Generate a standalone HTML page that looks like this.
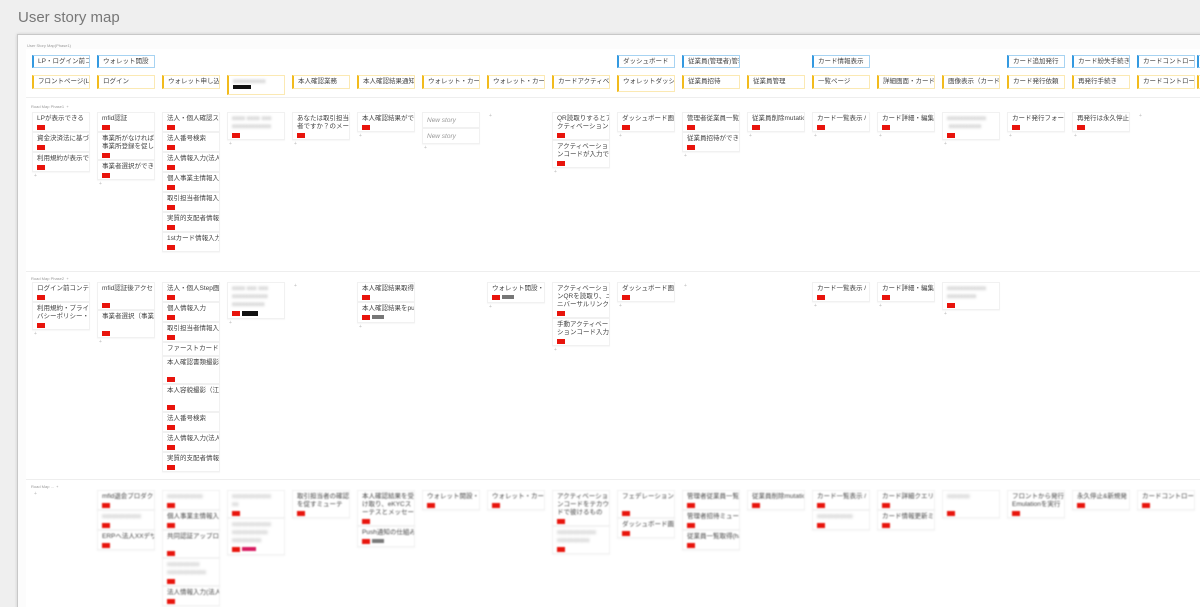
<!DOCTYPE html>
<html><head><meta charset="utf-8"><style>
*{margin:0;padding:0;box-sizing:border-box}
html,body{width:1200px;height:607px;overflow:hidden}
body{background:#efefef;font-family:"Liberation Sans","Noto Sans CJK JP",sans-serif;position:relative}
h1{position:absolute;left:18px;top:9px;font-weight:normal;font-size:15px;color:#777}
.panel{position:absolute;left:17px;top:34px;width:1190px;height:580px;background:#fcfcfc;border:1px solid #c8c8c8;box-shadow:0 0 3px rgba(0,0,0,.15)}
.inner{position:absolute;left:26px;top:49px;width:1180px;height:560px;background:#fff}
.lbl{position:absolute;font-size:4px;color:#999}
.hline{position:absolute;left:26px;width:1180px;height:1px;background:#eee}
.act,.task{position:absolute;width:58px;height:13px;font-size:6.5px;line-height:11px;padding-left:4px;white-space:nowrap;overflow:hidden;color:#444;background:#fff}
.act{border:1px solid #a7d3f2;border-left:2px solid #3399e0}
.task{border:1px solid #fbe9b3;border-left:2px solid #f2bb1c;height:14px}
.col{position:absolute;width:58px}
.c{background:#fff;border:1px solid #f1f1f1;box-shadow:0 1px 1px rgba(0,0,0,.04);padding:2px 4px 1px;font-size:6.5px;line-height:8px;color:#444;white-space:nowrap;overflow:hidden;min-height:20px}
.c i{display:block;width:8px;height:5px;background:#e8140c;margin-top:2px}
.c b{display:inline-block;width:8px;height:5px;background:#e8140c;margin-top:2px;vertical-align:top}
.c u{display:inline-block;width:12px;height:4px;background:#777;margin:2px 0 0 2px;vertical-align:top}
.c.ns{color:#999;font-style:italic;min-height:16px;line-height:11px}
.bl{filter:blur(1.2px);color:#999}
.r3 .c{filter:blur(.7px)}
.dot{font-size:5px;color:#bbb;padding-left:2px;line-height:8px}
</style></head><body>
<h1>User story map</h1>
<div class="panel"></div>
<div class="inner"></div>
<div class="lbl" style="left:27px;top:43px">User Story Map(Phase1)</div>

<div class="act" style="left:32px;top:55px">LP・ログイン前コ</div>
<div class="act" style="left:97px;top:55px">ウォレット開設</div>
<div class="act" style="left:617px;top:55px">ダッシュボード</div>
<div class="act" style="left:682px;top:55px">従業員(管理者)管理</div>
<div class="act" style="left:812px;top:55px">カード情報表示</div>
<div class="act" style="left:1007px;top:55px">カード追加発行</div>
<div class="act" style="left:1072px;top:55px">カード紛失手続き</div>
<div class="act" style="left:1137px;top:55px">カードコントロー</div>
<div class="act" style="left:1197px;top:55px"></div>

<div class="task" style="left:32px;top:75px">フロントページ(LP</div>
<div class="task" style="left:97px;top:75px">ログイン</div>
<div class="task" style="left:162px;top:75px">ウォレット申し込</div>
<div class="task" style="left:227px;top:75px;height:20px"><span class="bl">xxxxxxxxxx</span><br><span style="display:inline-block;width:18px;height:4px;background:#111;vertical-align:top;margin-top:-2px"></span></div>
<div class="task" style="left:292px;top:75px">本人確認業務</div>
<div class="task" style="left:357px;top:75px">本人確認結果通知</div>
<div class="task" style="left:422px;top:75px">ウォレット・カー</div>
<div class="task" style="left:487px;top:75px">ウォレット・カー</div>
<div class="task" style="left:552px;top:75px">カードアクティベ</div>
<div class="task" style="left:617px;top:75px;height:17px">ウォレットダッシ</div>
<div class="task" style="left:682px;top:75px">従業員招待</div>
<div class="task" style="left:747px;top:75px">従業員管理</div>
<div class="task" style="left:812px;top:75px">一覧ページ</div>
<div class="task" style="left:877px;top:75px">詳細画面・カード</div>
<div class="task" style="left:942px;top:75px">画像表示（カード</div>
<div class="task" style="left:1007px;top:75px">カード発行依頼</div>
<div class="task" style="left:1072px;top:75px">再発行手続き</div>
<div class="task" style="left:1137px;top:75px">カードコントロー</div>
<div class="task" style="left:1197px;top:75px"></div>

<div class="hline" style="top:97px"></div>
<div class="lbl" style="left:31px;top:104px">Road Map Phase1 &nbsp;+</div>

<!-- release 1 -->
<div class="col" style="left:32px;top:112px"><div class="c">LPが表示できる<i></i></div><div class="c">資金決済法に基づ<i></i></div><div class="c">利用規約が表示で<i></i></div><div class="dot">+</div></div>
<div class="col" style="left:97px;top:112px"><div class="c">mfid認証<i></i></div><div class="c">事業所がなければ<br>事業所登録を促し<i></i></div><div class="c">事業者選択ができ<i></i></div><div class="dot">+</div></div>
<div class="col" style="left:162px;top:112px"><div class="c">法人・個人確認ス<i></i></div><div class="c">法人番号検索<i></i></div><div class="c">法人情報入力(法人<i></i></div><div class="c">個人事業主情報入<i></i></div><div class="c">取引担当者情報入<i></i></div><div class="c">実質的支配者情報<i></i></div><div class="c">1stカード情報入力<i></i></div></div>
<div class="col" style="left:227px;top:112px"><div class="c"><span class="bl">xxxx xxxx xxx<br>xxxxxxxxxxxx</span><i></i></div><div class="dot">+</div></div>
<div class="col" style="left:292px;top:112px"><div class="c">あなたは取引担当<br>者ですか？のメー<i></i></div><div class="dot">+</div></div>
<div class="col" style="left:357px;top:112px"><div class="c">本人確認結果がで<i></i></div><div class="dot">+</div></div>
<div class="col" style="left:422px;top:112px"><div class="c ns">New story</div><div class="c ns">New story</div><div class="dot">+</div></div>
<div class="col" style="left:487px;top:112px"><div class="dot">+</div></div>
<div class="col" style="left:552px;top:112px"><div class="c">QR読取りするとア<br>クティベーション<i></i></div><div class="c">アクティベーショ<br>ンコードが入力で<i></i></div><div class="dot">+</div></div>
<div class="col" style="left:617px;top:112px"><div class="c">ダッシュボード画<i></i></div><div class="dot">+</div></div>
<div class="col" style="left:682px;top:112px"><div class="c">管理者従業員一覧<i></i></div><div class="c">従業員招待ができ<i></i></div><div class="dot">+</div></div>
<div class="col" style="left:747px;top:112px"><div class="c">従業員削除mutatio<i></i></div><div class="dot">+</div></div>
<div class="col" style="left:812px;top:112px"><div class="c">カード一覧表示 /<i></i></div><div class="dot">+</div></div>
<div class="col" style="left:877px;top:112px"><div class="c">カード詳細・編集<i></i></div><div class="dot">+</div></div>
<div class="col" style="left:942px;top:112px"><div class="c"><span class="bl">xxxxxxxxxxxx<br>&nbsp;xxxxxxxxxx</span><i></i></div><div class="dot">+</div></div>
<div class="col" style="left:1007px;top:112px"><div class="c">カード発行フォー<i></i></div><div class="dot">+</div></div>
<div class="col" style="left:1072px;top:112px"><div class="c">再発行は永久停止&amp;<i></i></div><div class="dot">+</div></div>
<div class="col" style="left:1137px;top:112px"><div class="dot">+</div></div>

<div class="hline" style="top:271px"></div>
<div class="lbl" style="left:31px;top:276px">Road Map Phase2 &nbsp;+</div>

<!-- release 2 -->
<div class="col" style="left:32px;top:282px"><div class="c">ログイン前コンテ<i></i></div><div class="c">利用規約・プライ<br>バシーポリシー・<i></i></div><div class="dot">+</div></div>
<div class="col" style="left:97px;top:282px"><div class="c">mfid認証後アクセ<br>&nbsp;<i></i></div><div class="c">事業者選択（事業<br>&nbsp;<i></i></div><div class="dot">+</div></div>
<div class="col" style="left:162px;top:282px"><div class="c">法人・個人Step画<i></i></div><div class="c">個人情報入力<i></i></div><div class="c">取引担当者情報入<i></i></div><div class="c" style="min-height:14px">ファーストカード</div><div class="c">本人確認書類撮影<br>&nbsp;<i></i></div><div class="c">本人容貌撮影（江<br>&nbsp;<i></i></div><div class="c">法人番号検索<i></i></div><div class="c">法人情報入力(法人<i></i></div><div class="c">実質的支配者情報<i></i></div></div>
<div class="col" style="left:227px;top:282px"><div class="c"><span class="bl">xxxx xxx xxx<br>xxxxxxxxxxx<br>xxxxxxxxxx</span><br><b></b><span style="display:inline-block;width:16px;height:5px;background:#111;margin:2px 0 0 2px;vertical-align:top"></span></div><div class="dot">+</div></div>
<div class="col" style="left:292px;top:282px"><div class="dot">+</div></div>
<div class="col" style="left:357px;top:282px"><div class="c">本人確認結果取得<i></i></div><div class="c">本人確認結果をpus<br><b></b><u></u></div><div class="dot">+</div></div>
<div class="col" style="left:487px;top:282px"><div class="c">ウォレット開設・<br><b></b><u></u></div><div class="dot">+</div></div>
<div class="col" style="left:552px;top:282px"><div class="c">アクティベーショ<br>ンQRを読取り、ユ<br>ニバーサルリンク<i></i></div><div class="c">手動アクティベー<br>ションコード入力<i></i></div><div class="dot">+</div></div>
<div class="col" style="left:617px;top:282px"><div class="c">ダッシュボード画<i></i></div><div class="dot">+</div></div>
<div class="col" style="left:682px;top:282px"><div class="dot">+</div></div>
<div class="col" style="left:812px;top:282px"><div class="c">カード一覧表示 /<i></i></div><div class="dot">+</div></div>
<div class="col" style="left:877px;top:282px"><div class="c">カード詳細・編集<i></i></div><div class="dot">+</div></div>
<div class="col" style="left:942px;top:282px"><div class="c"><span class="bl">xxxxxxxxxxxx<br>xxxxxxxxx</span><i></i></div><div class="dot">+</div></div>

<div class="hline" style="top:479px"></div>
<div class="lbl" style="left:31px;top:484px">Road Map ... &nbsp;+</div>

<!-- release 3 -->
<div class="r3">
<div class="col" style="left:32px;top:490px"><div class="dot">+</div></div>
<div class="col" style="left:97px;top:490px"><div class="c">mfid退会プロダク<i></i></div><div class="c"><span class="bl">xxxxxxxxxxxx</span><i></i></div><div class="c">ERPへ法人XXデザイン<i></i></div></div>
<div class="col" style="left:162px;top:490px"><div class="c"><span class="bl">xxxxxxxxxxx</span><i></i></div><div class="c">個人事業主情報入<i></i></div><div class="c">共同認証アップロ<br>&nbsp;<i></i></div><div class="c"><span class="bl">xxxxxxxxxx<br>xxxxxxxxxxxx</span><i></i></div><div class="c">法人情報入力(法人<i></i></div></div>
<div class="col" style="left:227px;top:490px"><div class="c"><span class="bl">xxxxxxxxxxxx<br>xx</span><i></i></div><div class="c"><span class="bl">xxxxxxxxxxxx<br>xxxxxxxxxxx<br>xxxxxxxxx</span><br><b></b><span style="display:inline-block;width:14px;height:4px;background:#d81b60;margin:2px 0 0 2px;vertical-align:top"></span></div></div>
<div class="col" style="left:292px;top:490px"><div class="c">取引担当者の確認<br>を促すミューテ<i></i></div></div>
<div class="col" style="left:357px;top:490px"><div class="c">本人確認結果を受<br>け取り、eKYCス<br>ーテスとメッセー<i></i></div><div class="c">Push通知の仕組み<br><b></b><u></u></div></div>
<div class="col" style="left:422px;top:490px"><div class="c">ウォレット開設・<i></i></div></div>
<div class="col" style="left:487px;top:490px"><div class="c">ウォレット・カー<i></i></div></div>
<div class="col" style="left:552px;top:490px"><div class="c">アクティベーショ<br>ンコードをテカウ<br>ドで彼けるもの<i></i></div><div class="c"><span class="bl">xxxxxxxxxxxx<br>xxxxxxxxxx</span><i></i></div></div>
<div class="col" style="left:617px;top:490px"><div class="c">フェデレーション<br>&nbsp;<i></i></div><div class="c">ダッシュボード画<i></i></div></div>
<div class="col" style="left:682px;top:490px"><div class="c">管理者従業員一覧<i></i></div><div class="c">管理者招待ミュー<i></i></div><div class="c">従業員一覧取得(ha<i></i></div></div>
<div class="col" style="left:747px;top:490px"><div class="c">従業員削除mutatio<i></i></div></div>
<div class="col" style="left:812px;top:490px"><div class="c">カード一覧表示 /<i></i></div><div class="c"><span class="bl">xxxxxxxxxxx</span><i></i></div></div>
<div class="col" style="left:877px;top:490px"><div class="c">カード詳細クエリ<i></i></div><div class="c">カード情報更新ミ<i></i></div></div>
<div class="col" style="left:942px;top:490px"><div class="c"><span class="bl">xxxxxxx</span><br>&nbsp;<i></i></div></div>
<div class="col" style="left:1007px;top:490px"><div class="c">フロントから発行<br>Emulationを実行<i></i></div></div>
<div class="col" style="left:1072px;top:490px"><div class="c">永久停止&amp;新規発<i></i></div></div>
<div class="col" style="left:1137px;top:490px"><div class="c">カードコントロー<i></i></div></div>
</div>
</body></html>
